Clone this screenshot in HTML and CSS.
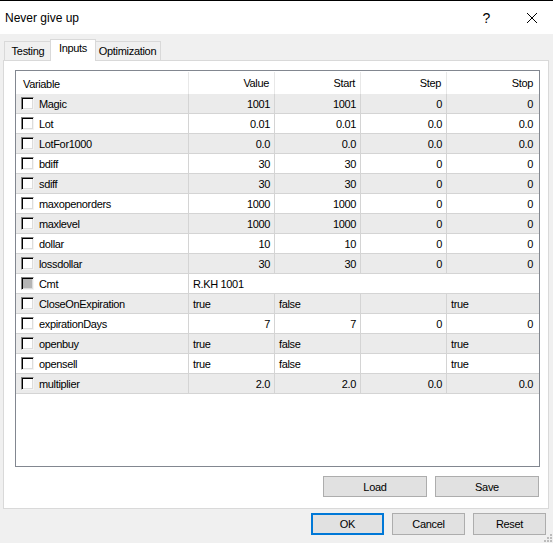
FILE: index.html
```html
<!DOCTYPE html>
<html>
<head>
<meta charset="utf-8">
<link rel="stylesheet" href="styles.css">
</head>
<body>
<div class="window">
  <div class="titlebar">
    <span class="title">Never give up</span>
    <span class="help">?</span>
    <span class="close"><svg width="12" height="12" viewBox="0 0 12 12"><path d="M1 1 L11 11 M11 1 L1 11" stroke="#000" stroke-width="1" fill="none"/></svg></span>
  </div>
  <div class="tabs">
    <div class="tab t-testing">Testing</div>
    <div class="tab active t-inputs">Inputs</div>
    <div class="tab t-opt">Optimization</div>
  </div>
  <div class="panel">
    <div class="list">
      <div class="row head">
        <div class="c c1">Variable</div><div class="c r">Value</div><div class="c r">Start</div><div class="c r">Step</div><div class="c r last">Stop</div>
      </div>
      <div class="row alt"><div class="c c1"><span class="cb"></span>Magic</div><div class="c r">1001</div><div class="c r">1001</div><div class="c r">0</div><div class="c r last">0</div></div>
      <div class="row"><div class="c c1"><span class="cb"></span>Lot</div><div class="c r">0.01</div><div class="c r">0.01</div><div class="c r">0.0</div><div class="c r last">0.0</div></div>
      <div class="row alt"><div class="c c1"><span class="cb"></span>LotFor1000</div><div class="c r">0.0</div><div class="c r">0.0</div><div class="c r">0.0</div><div class="c r last">0.0</div></div>
      <div class="row"><div class="c c1"><span class="cb"></span>bdiff</div><div class="c r">30</div><div class="c r">30</div><div class="c r">0</div><div class="c r last">0</div></div>
      <div class="row alt"><div class="c c1"><span class="cb"></span>sdiff</div><div class="c r">30</div><div class="c r">30</div><div class="c r">0</div><div class="c r last">0</div></div>
      <div class="row"><div class="c c1"><span class="cb"></span>maxopenorders</div><div class="c r">1000</div><div class="c r">1000</div><div class="c r">0</div><div class="c r last">0</div></div>
      <div class="row alt"><div class="c c1"><span class="cb"></span>maxlevel</div><div class="c r">1000</div><div class="c r">1000</div><div class="c r">0</div><div class="c r last">0</div></div>
      <div class="row"><div class="c c1"><span class="cb"></span>dollar</div><div class="c r">10</div><div class="c r">10</div><div class="c r">0</div><div class="c r last">0</div></div>
      <div class="row alt"><div class="c c1"><span class="cb"></span>lossdollar</div><div class="c r">30</div><div class="c r">30</div><div class="c r">0</div><div class="c r last">0</div></div>
      <div class="row"><div class="c c1"><span class="cb disabled"></span>Cmt</div><div class="c span last">R.KH 1001</div></div>
      <div class="row alt"><div class="c c1"><span class="cb"></span>CloseOnExpiration</div><div class="c">true</div><div class="c">false</div><div class="c"></div><div class="c last">true</div></div>
      <div class="row"><div class="c c1"><span class="cb"></span>expirationDays</div><div class="c r">7</div><div class="c r">7</div><div class="c r">0</div><div class="c r last">0</div></div>
      <div class="row alt"><div class="c c1"><span class="cb"></span>openbuy</div><div class="c">true</div><div class="c">false</div><div class="c"></div><div class="c last">true</div></div>
      <div class="row"><div class="c c1"><span class="cb"></span>opensell</div><div class="c">true</div><div class="c">false</div><div class="c"></div><div class="c last">true</div></div>
      <div class="row alt"><div class="c c1"><span class="cb"></span>multiplier</div><div class="c r">2.0</div><div class="c r">2.0</div><div class="c r">0.0</div><div class="c r last">0.0</div></div>
    </div>
    <div class="panel-buttons">
      <button class="btn wide">Load</button>
      <button class="btn wide">Save</button>
    </div>
  </div>
  <div class="dialog-buttons">
    <button class="btn dlg focus">OK</button>
    <button class="btn dlg">Cancel</button>
    <button class="btn dlg">Reset</button>
  </div>
  <svg class="grip" width="8" height="8" viewBox="0 0 8 8">
    <rect x="6" y="0" width="2" height="2" fill="#bcbcbc"/>
    <rect x="3" y="3" width="2" height="2" fill="#bcbcbc"/>
    <rect x="6" y="3" width="2" height="2" fill="#bcbcbc"/>
    <rect x="0" y="6" width="2" height="2" fill="#bcbcbc"/>
    <rect x="3" y="6" width="2" height="2" fill="#bcbcbc"/>
    <rect x="6" y="6" width="2" height="2" fill="#bcbcbc"/>
  </svg>
</div>
</body>
</html>
```
FILE: styles.css
```css
* { box-sizing: border-box; }
html, body { margin: 0; padding: 0; background: #f0f0f0; }
body { font-family: "Liberation Sans", Arial, sans-serif; color: #000; }

.window {
  width: 553px;
  height: 543px;
  background: #f0f0f0;
  border-top: 1px solid #000;
  position: relative;
  display: flex;
  flex-direction: column;
  overflow: hidden;
}

.titlebar {
  height: 33px;
  background: #fff;
  display: flex;
  align-items: center;
  padding-left: 5px;
  flex: none;
}
.title { font-size: 12px; flex: 1; padding-top: 1px; }
.help { width: 46px; text-align: center; font-size: 14px; padding-left: 5px; padding-top: 1px; }
.close { width: 46px; display: flex; justify-content: center; align-items: center; padding-left: 4px; padding-top: 1px; }

.tabs {
  height: 26px;
  display: flex;
  align-items: flex-end;
  padding-left: 4px;
  flex: none;
}
.tab {
  height: 19px;
  border: 1px solid #d9d9d9;
  border-bottom: none;
  background: #f0f0f0;
  font-size: 11px;
  letter-spacing: -0.3px;
  display: flex;
  align-items: center;
  justify-content: center;
  padding-bottom: 1px;
}
.t-testing { width: 47px; border-right: none; }
.t-inputs { width: 46px; }
.t-opt { width: 66px; border-left: none; }
.tab.active {
  height: 22px;
  background: #fff;
  margin: 0 -1px -1px -1px;
  position: relative;
  z-index: 1;
  padding-bottom: 5px;
}

.panel {
  width: 546px;
  height: 449px;
  margin-left: 3px;
  background: #fff;
  border: 1px solid #d9d9d9;
  flex: none;
  display: flex;
  flex-direction: column;
}

.list {
  width: 525px;
  height: 397px;
  margin: 9px 0 0 11px;
  border: 1px solid #828790;
  background: #fff;
  font-size: 11px;
  letter-spacing: -0.35px;
  flex: none;
  padding-top: 1px;
}

.row {
  display: grid;
  grid-template-columns: 173px 86px 86px 86px 92px;
  height: 20px;
  border-bottom: 1px solid #d4d4d4;
}
.row.alt { background: #ebebeb; }
.row.head { height: 22px; border-bottom: none; background: #fff; }

.c {
  border-right: 1px solid #d4d4d4;
  padding: 1px 4px 0 4px;
  line-height: 18px;
  white-space: nowrap;
  overflow: hidden;
}
.c.last { border-right: none; }
.c.r { text-align: right; }
.c.r.last { padding-right: 6px; }
.c.span { grid-column: span 4; }
.c1 { display: flex; align-items: center; padding-left: 5px; }
.c1 .cb { margin-top: -1px; }

.head .c { line-height: 20px; border-right-color: #e8e8e8; padding-right: 5px; }
.head .c1 { padding-left: 7px; }
.head .c.last { padding-right: 6px; }

.cb {
  width: 13px;
  height: 13px;
  flex: none;
  margin-right: 5px;
  background: #fff;
  border: 1px solid;
  border-color: #808080 #f4f4f4 #f4f4f4 #808080;
  box-shadow: inset 1px 1px 0 #000, inset -1px -1px 0 #dcdcdc;
}
.cb.disabled { background: #b4b4b4; }

.panel-buttons {
  display: flex;
  justify-content: flex-end;
  gap: 8px;
  margin-top: 9px;
  padding-right: 9px;
}

.btn {
  font-family: "Liberation Sans", Arial, sans-serif;
  font-size: 11px;
  letter-spacing: -0.3px;
  color: #000;
  background: #e1e1e1;
  border: 1px solid #adadad;
  padding: 0;
  margin: 0;
}
.btn.wide { width: 104px; height: 21px; }
.dialog-buttons {
  display: flex;
  justify-content: flex-end;
  gap: 8px;
  margin-top: 4px;
  padding-right: 7px;
}
.btn.dlg { width: 73px; height: 22px; }
.btn.focus { border: 2px solid #0078d7; }

.grip { position: absolute; right: 1px; bottom: 1px; }
```
